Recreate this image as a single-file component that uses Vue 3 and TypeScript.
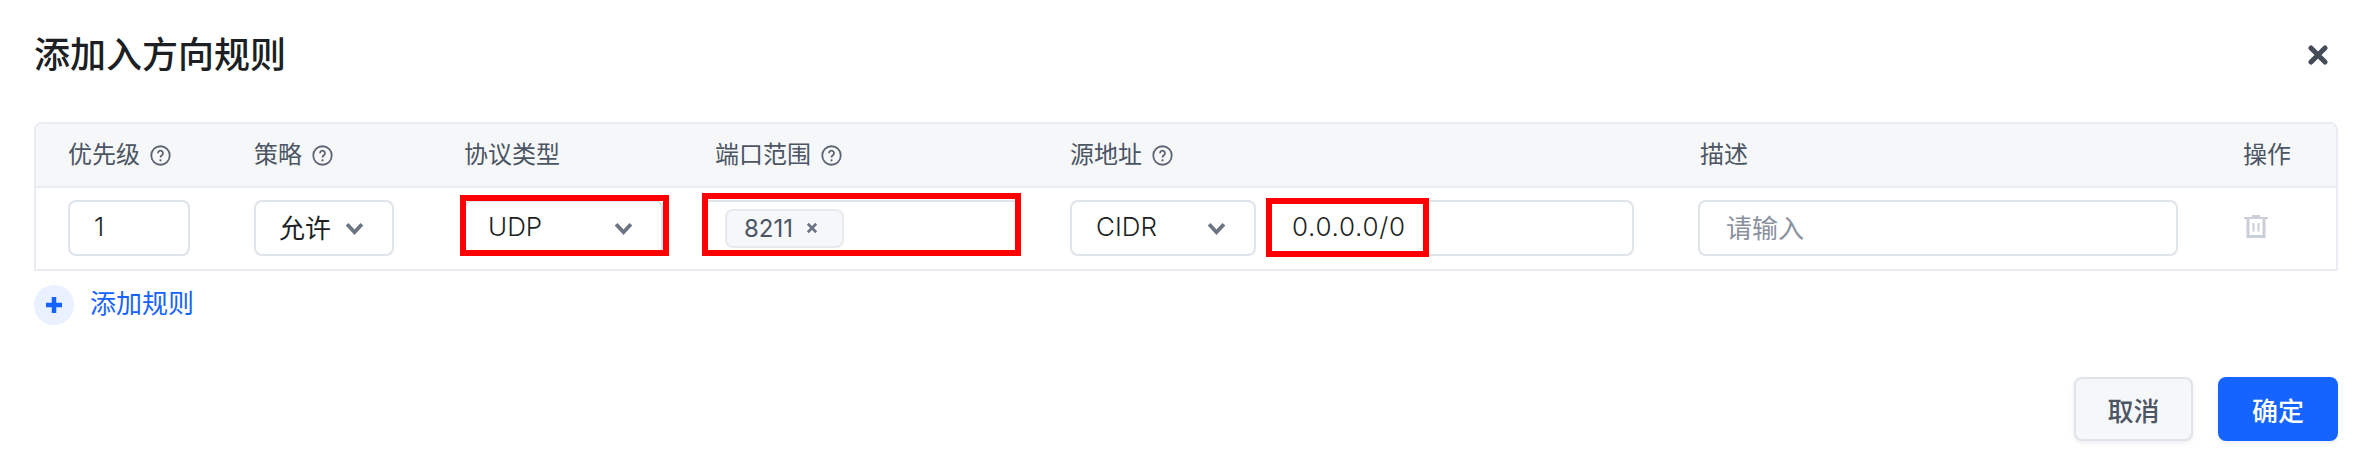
<script setup lang="ts">
const helpPath = 'M7.6 7.8a2.4 2.4 0 1 1 3.7 2c-.9.6-1.3 1-1.3 2'
</script>

<template>
  <div class="dialog">
    <div class="head">
      <h1 class="title">添加入方向规则</h1>
      <svg class="close" width="20" height="20" viewBox="0 0 20 20"><path d="M3 3l14 14M17 3L3 17" /></svg>
    </div>

    <div class="table">
      <div class="grid thead">
        <div class="th">优先级<svg class="help" viewBox="0 0 20 20"><circle cx="10" cy="10" r="8.8" /><path :d="helpPath" /><circle class="dot" cx="10" cy="14.6" r="1.1" /></svg></div>
        <div class="th">策略<svg class="help" viewBox="0 0 20 20"><circle cx="10" cy="10" r="8.8" /><path :d="helpPath" /><circle class="dot" cx="10" cy="14.6" r="1.1" /></svg></div>
        <div class="th">协议类型</div>
        <div class="th th-port">端口范围<svg class="help" viewBox="0 0 20 20"><circle cx="10" cy="10" r="8.8" /><path :d="helpPath" /><circle class="dot" cx="10" cy="14.6" r="1.1" /></svg></div>
        <div class="th">源地址<svg class="help" viewBox="0 0 20 20"><circle cx="10" cy="10" r="8.8" /><path :d="helpPath" /><circle class="dot" cx="10" cy="14.6" r="1.1" /></svg></div>
        <div class="th th-desc">描述</div>
        <div class="th">操作</div>
      </div>
      <div class="grid tbody">
        <div class="box w-priority latin">1</div>
        <div class="box select w-policy">允许<svg class="chev" viewBox="0 0 18 12"><path d="M2 2l7 7.5L16 2" /></svg></div>
        <div class="box select w-proto latin">UDP<svg class="chev" viewBox="0 0 18 12"><path d="M2 2l7 7.5L16 2" /></svg><span class="mark mark-proto"></span></div>
        <div class="box w-port">
          <span class="tag">8211<svg class="tag-x" viewBox="0 0 10 10"><path d="M1.5 1.5l7 7M8.5 1.5l-7 7" /></svg></span>
          <span class="mark mark-port"></span>
        </div>
        <div class="source">
          <div class="box select w-cidr latin">CIDR<svg class="chev" viewBox="0 0 18 12"><path d="M2 2l7 7.5L16 2" /></svg></div>
          <div class="box grow ip latin">0.0.0.0/0<span class="mark mark-ip"></span></div>
        </div>
        <div class="box w-desc placeholder">请输入</div>
        <svg class="trash" width="24" height="24" viewBox="0 0 24 24">
          <path d="M8 1h8v2H8zM0 3h24v2H0z" fill="currentColor" />
          <path d="M4 4v18.5h16V4" fill="none" stroke="currentColor" stroke-width="3" />
          <path d="M9.5 9v8.5M14.5 9v8.5" fill="none" stroke="currentColor" stroke-width="2" />
        </svg>
      </div>
    </div>

    <div class="add">
      <span class="add-icon"><svg width="20" height="20" viewBox="0 0 20 20"><path d="M10 2v16M2 10h16" /></svg></span>
      <span class="add-text">添加规则</span>
    </div>

    <div class="footer">
      <button class="btn cancel">取消</button>
      <button class="btn ok">确定</button>
    </div>
  </div>
</template>

<style>
html, body { margin: 0; background: #fff; }
</style>

<style scoped>
.dialog {
  box-sizing: border-box;
  width: 2368px;
  height: 458px;
  padding: 0 30px 0 34px;
  font-family: Inter, "Noto Sans CJK SC", sans-serif;
  color: #1c1f23;
  background: #fff;
}
.head {
  height: 122px;
  padding-bottom: 12px;
  box-sizing: border-box;
  display: flex;
  align-items: center;
  justify-content: space-between;
}
.title {
  margin: 0;
  font-size: 36px;
  font-weight: 500;
  line-height: 50px;
  color: #1c1f23;
}
.close { margin-right: 10px; }
.close path { stroke: #454b57; stroke-width: 5; fill: none; stroke-linecap: round; }
.table {
  border: 2px solid #e9ecf1;
  border-radius: 8px 8px 0 0;
}
.grid {
  display: grid;
  grid-template-columns: 186px 210px 238px 368px 628px 545px 1fr;
  padding-left: 32px;
}
.thead {
  height: 62px;
  background: #f6f7f9;
  border-radius: 6px 6px 0 0;
  border-bottom: 2px solid #e9ecf1;
  align-items: center;
}
.th {
  display: flex;
  align-items: center;
  font-size: 24px;
  line-height: 34px;
  color: #4b5563;
}
.th-port { padding-left: 13px; }
.th-desc { padding-left: 2px; }
.help { width: 21px; height: 21px; margin-left: 10px; }
.help circle, .help path { fill: none; stroke: #5b6472; stroke-width: 1.7; }
.help .dot { fill: #5b6472; stroke: none; }
.tbody {
  padding-top: 12px;
  padding-bottom: 13px;
  align-items: center;
}
.box {
  position: relative;
  box-sizing: border-box;
  height: 56px;
  display: flex;
  align-items: center;
  padding: 0 24px 3px;
  border: 2px solid #dfe3ea;
  border-radius: 8px;
  background: #fff;
  font-size: 26px;
  color: #1c1f23;
}
.latin { font-weight: 300; }
.select { justify-content: space-between; padding-right: 28px; }
.w-policy { padding-left: 23px; }
.w-proto { padding-left: 22px; }
.w-cidr { padding-left: 24px; }
.w-priority { width: 122px; }
.w-policy { width: 140px; }
.w-proto { width: 199px; }
.w-port { width: 319px; padding-left: 21px; padding-bottom: 0; }
.w-cidr { width: 186px; flex: none; }
.w-desc { width: 480px; }
.source { display: flex; gap: 10px; width: 564px; }
.grow { flex: 1; }
.ip { letter-spacing: 0.7px; }
.placeholder { color: #8a919f; padding-left: 26px; }
.chev { width: 19px; height: 13px; flex: none; margin-top: 3px; }
.chev path { fill: none; stroke: #6b7483; stroke-width: 3.6; }
.tag {
  box-sizing: border-box;
  height: 39px;
  width: 119px;
  display: flex;
  align-items: center;
  padding-left: 17px;
  border: 2px solid #e6e9ee;
  border-radius: 8px;
  background: #f6f7f9;
  font-size: 24px;
  color: #4b5563;
}
.tag-x { width: 12px; height: 12px; margin-left: 13px; }
.tag-x path { stroke: #6b7483; stroke-width: 2.2; fill: none; }
.mark {
  position: absolute;
  box-sizing: border-box;
  border: 6px solid #ff0000;
  pointer-events: none;
}
.mark-proto { left: -6px; right: -8px; top: -7px; bottom: -2px; }
.mark-port { left: -2px; right: -2px; top: -9px; bottom: -2px; }
.mark-ip { left: -2px; width: 163px; top: -4px; bottom: -3px; }
.trash { color: #c9ced8; margin-top: -4px; margin-left: 1px; }
.add {
  display: flex;
  align-items: center;
  height: 40px;
  margin-top: 14px;
}
.add-icon {
  width: 40px;
  height: 40px;
  border-radius: 50%;
  background: #e9f0ff;
  display: flex;
  align-items: center;
  justify-content: center;
}
.add-icon path { stroke: #1664ff; stroke-width: 4.5; fill: none; }
.add-text {
  margin-left: 16px;
  margin-top: -7px;
  font-size: 26px;
  color: #1664ff;
}
.footer {
  display: flex;
  justify-content: flex-end;
  gap: 25px;
  margin-top: 52px;
}
.btn {
  box-sizing: border-box;
  height: 64px;
  border-radius: 8px;
  font-family: inherit;
  font-size: 26px;
  font-weight: 500;
  padding: 0;
  box-shadow: 0 2px 4px rgba(30, 40, 60, 0.08);
}
.cancel {
  width: 119px;
  border: 2px solid #dfe3ea;
  background: #f6f7f9;
  color: #4b5563;
}
.ok {
  width: 120px;
  border: 2px solid #1664ff;
  background: #1664ff;
  color: #fff;
}
</style>
